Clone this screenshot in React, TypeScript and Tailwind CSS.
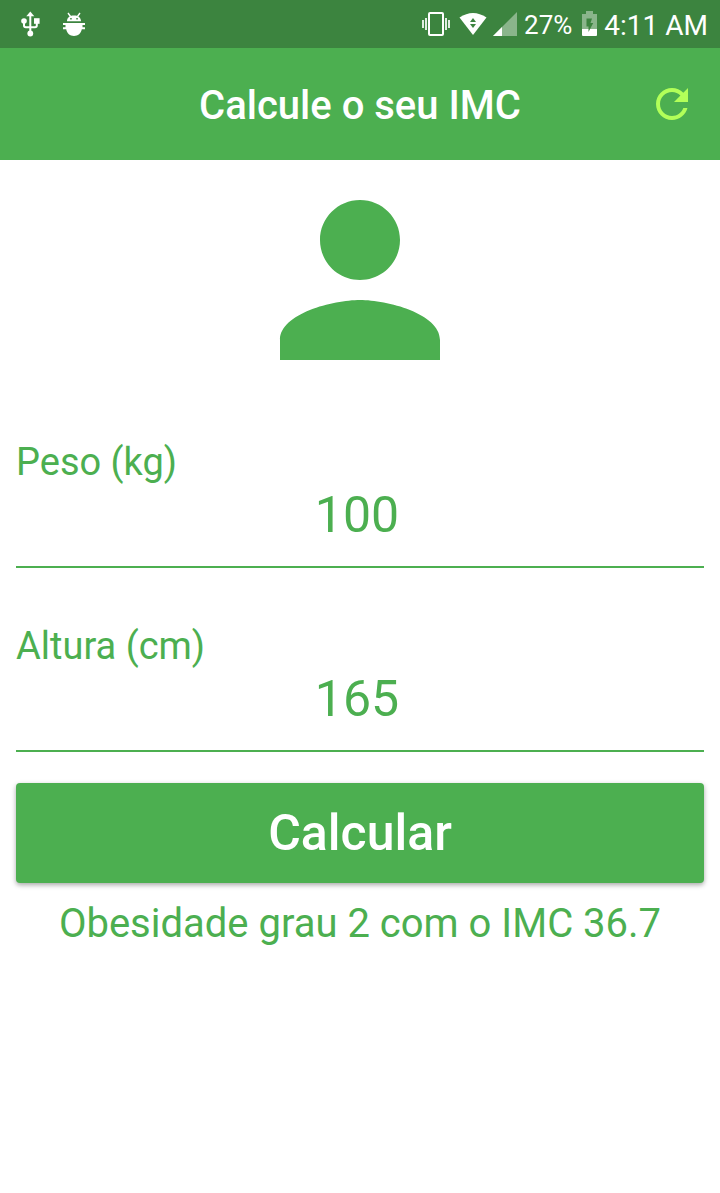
import { useState } from "react";
import type { FormEvent } from "react";

function UsbIcon() {
  return (
    <svg viewBox="0 0 22 28" className="h-7 w-[22px]" fill="none" stroke="#fff" strokeWidth="2" aria-hidden="true">
      <path d="M10.300 4V23M4 12V15.500Q4 17.300 5.800 17.300H15Q16.800 17.300 16.800 15.500V12" />
      <path d="M10.300 1.500L14.300 6.300H6.300z" fill="#fff" stroke="none" />
      <circle cx="4" cy="11" r="2.800" fill="#fff" stroke="none" />
      <path d="M14 8.200H19.600V13.800H14z" fill="#fff" stroke="none" />
      <circle cx="10.300" cy="23.500" r="2.900" fill="#fff" stroke="none" />
    </svg>
  );
}

function DebugIcon() {
  return (
    <svg viewBox="0 0 22 26" className="h-[26px] w-[22px]" fill="#fff" aria-hidden="true">
      <path d="M5 2L7.500 5.500M17 2L14.500 5.500" stroke="#fff" strokeWidth="1.400" />
      <path fillRule="evenodd" d="M4 10.300C4 6.300 7 4.500 11 4.500S18 6.300 18 10.300zM7.200 7V8.400H8.700V7zM13.300 7V8.400H14.800V7z" />
      <path d="M0 12H22V14H19.500V16.300H22V18.300H18.800C18 22.500 15 25 11 25S4 22.500 3.200 18.300H0V16.300H2.500V14H0z" />
    </svg>
  );
}

function VibrateIcon() {
  return (
    <svg viewBox="0 0 28 26" className="h-[26px] w-7" fill="none" stroke="#fff" strokeWidth="2" aria-hidden="true">
      <rect x="7" y="2" width="14" height="22" rx="1" />
      <path d="M4 7V19M24 7V19" strokeWidth="1.700" />
      <path d="M1 9V17M27 9V17" strokeWidth="1.700" />
    </svg>
  );
}

function WifiIcon() {
  return (
    <svg viewBox="0 0 28 24" className="h-6 w-7" aria-hidden="true">
      <path d="M.500 5.500Q14-3.500 27.500 5.500L14 23z" fill="#fff" />
      <path d="M14 6L17 10H11zM14 16L11 12H17z" fill="#3c843f" />
    </svg>
  );
}

function SignalIcon() {
  return (
    <svg viewBox="0 0 24 24" className="size-6" aria-hidden="true">
      <path d="M0 24L24 0V24z" fill="#fff" fillOpacity=".4" />
      <path d="M0 24L9 15V24z" fill="#fff" />
    </svg>
  );
}

function BatteryIcon() {
  return (
    <svg viewBox="0 0 15 25" className="h-[25px] w-[15px]" aria-hidden="true">
      <path d="M4 0H11V3H15V18H0V3H4z" fill="#fff" fillOpacity=".4" />
      <path d="M0 18H15V24Q15 25 14 25H1Q0 25 0 24z" fill="#fff" />
      <path d="M4.500 7.500H10L8.500 12H11.200L6.500 21V15.500H4.500z" fill="#3c843f" />
    </svg>
  );
}

function StatusBar() {
  return (
    <div className="flex h-12 items-center justify-between bg-[#3c843f] pr-3 pl-5 text-white">
      <div className="flex items-center gap-[21px]">
        <UsbIcon />
        <DebugIcon />
      </div>
      <div className="flex items-center">
        <VibrateIcon />
        <span className="ml-[9px]"><WifiIcon /></span>
        <span className="ml-1.5"><SignalIcon /></span>
        <span className="ml-[7px] pt-0.5 text-[26px]">27%</span>
        <span className="ml-2.5 pb-0.5"><BatteryIcon /></span>
        <span className="ml-[7px] pt-1 text-[28px]">4:11 AM</span>
      </div>
    </div>
  );
}

type FieldProps = {
  id: string;
  label: string;
  value: string;
  onChange: (value: string) => void;
};

function Field({ id, label, value, onChange }: FieldProps) {
  return (
    <div className="flex flex-col pt-10 pb-4">
      <label htmlFor={id} className="text-[38px] leading-11">{label}</label>
      <input
        id={id}
        inputMode="numeric"
        value={value}
        onChange={(e) => onChange(e.target.value)}
        className="h-[84px] w-full border-b-2 border-[#4caf50] bg-transparent pr-1.5 pb-5 text-center text-[50px] outline-none"
      />
    </div>
  );
}

function classify(weight: number, height: number) {
  const bmi = weight / (height / 100) ** 2;
  const text = bmi.toFixed(1);
  if (!Number.isFinite(bmi)) return "Informe seus dados";
  if (bmi < 18.6) return `Abaixo do peso com o IMC ${text}`;
  if (bmi < 24.9) return `Peso ideal com o IMC ${text}`;
  if (bmi < 29.9) return `Levemente acima do peso com o IMC ${text}`;
  if (bmi < 34.9) return `Obesidade grau 1 com o IMC ${text}`;
  if (bmi < 39.9) return `Obesidade grau 2 com o IMC ${text}`;
  return `Obesidade grau 3 com o IMC ${text}`;
}

export default function App() {
  const [weight, setWeight] = useState("100");
  const [height, setHeight] = useState("165");
  const [result, setResult] = useState(classify(100, 165));

  const submit = (e: FormEvent) => {
    e.preventDefault();
    setResult(classify(Number(weight), Number(height)));
  };

  const reset = () => {
    setWeight("");
    setHeight("");
    setResult("Informe seus dados");
  };

  return (
    <div className="min-h-screen bg-white font-[Roboto,sans-serif] text-[#4caf50]">
      <StatusBar />
      <header className="grid h-28 grid-cols-[80px_1fr_80px] items-center bg-[#4caf50] px-2">
        <h1 className="col-start-2 pt-1 text-center text-[40px] font-medium text-white">Calcule o seu IMC</h1>
        <button type="button" aria-label="Recomeçar" onClick={reset} className="justify-self-center text-[#b2ff59]">
          <svg viewBox="0 0 24 24" className="size-12" fill="currentColor" aria-hidden="true">
            <path d="M17.650 6.350C16.200 4.900 14.210 4 12 4c-4.420 0-7.990 3.580-7.990 8s3.570 8 7.990 8c3.730 0 6.840-2.550 7.730-6h-2.080c-.82 2.330-3.040 4-5.650 4-3.310 0-6-2.690-6-6s2.690-6 6-6c1.660 0 3.140.69 4.220 1.780L13 11h7V4l-2.350 2.350z" />
          </svg>
        </button>
      </header>
      <form onSubmit={submit} className="flex flex-col px-4">
        <svg viewBox="0 0 24 24" className="size-60 self-center" fill="currentColor" aria-hidden="true">
          <path d="M12 12c2.210 0 4-1.790 4-4s-1.790-4-4-4-4 1.790-4 4 1.790 4 4 4zm0 2c-2.670 0-8 1.340-8 4v2h16v-2c0-2.660-5.330-4-8-4z" />
        </svg>
        <Field id="peso" label="Peso (kg)" value={weight} onChange={setWeight} />
        <Field id="altura" label="Altura (cm)" value={height} onChange={setHeight} />
        <button type="submit" className="mt-[15px] h-[100px] rounded bg-[#4caf50] text-[50px] font-medium text-white shadow-[0_2px_5px_rgba(0,0,0,0.35)]">
          Calcular
        </button>
        <output htmlFor="peso altura" className="mt-4 text-center text-[40px] leading-[50px]">{result}</output>
      </form>
    </div>
  );
}
